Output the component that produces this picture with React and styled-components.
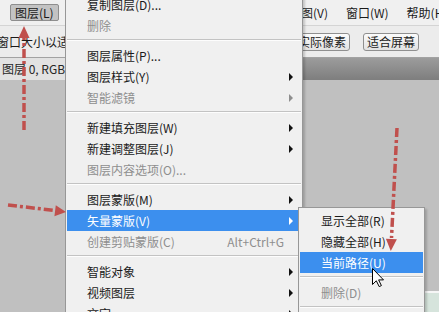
import React from "react";
import styled, { createGlobalStyle, css } from "styled-components";

const GlobalStyle = createGlobalStyle`
  html, body {
    margin: 0;
    padding: 0;
  }
  body {
    width: 439px;
    height: 312px;
    overflow: hidden;
    background: #c0c0c0;
    font-family: "Noto Sans CJK SC", "Microsoft YaHei", sans-serif;
    font-size: 12px;
    color: #1a1a1a;
  }
`;

const RED = "#c0504d";

const Screen = styled.div`
  position: relative;
  width: 439px;
  height: 312px;
  overflow: hidden;
  display: flex;
  flex-direction: column;
`;

const MenuBar = styled.div`
  flex: none;
  height: 25px;
  display: flex;
  align-items: center;
  padding-left: 10px;
  background: #f0f0f0;
  border-bottom: 1px solid #d4d4d4;
  white-space: nowrap;
`;

const BarItem = styled.div`
  box-sizing: border-box;
  height: 17px;
  line-height: 15px;
  padding: 0 8px;
  border: 1px solid transparent;
  flex: none;

  ${(p) =>
    p.$open &&
    css`
      background: #c3c3c3;
      border-color: #8e8e8e;
      border-radius: 2px;
      padding: 0 4px;
    `}
`;

const OptionsBar = styled.div`
  flex: none;
  height: 31px;
  display: flex;
  align-items: center;
  gap: 13px;
  background: #ececec;
  border-bottom: 1px solid #a2a2a2;
  white-space: nowrap;
`;

const OptionLabel = styled.div`
  flex: 0 0 284px;
  margin-left: -3px;
  overflow: hidden;
`;

const OptionButton = styled.div`
  flex: none;
  box-sizing: border-box;
  width: 56px;
  height: 18px;
  line-height: 16px;
  text-align: center;
  border: 1px solid #8f8f8f;
  border-radius: 3px;
  background: linear-gradient(#fbfbfb, #e2e2e2);
`;

const TabBar = styled.div`
  flex: none;
  height: 22px;
  display: flex;
  background: linear-gradient(#9c9c9c, #7e7e7e);
`;

const DocTab = styled.div`
  flex: 0 0 250px;
  padding-left: 2px;
  line-height: 22px;
  background: #e2e2e2;
  color: #262626;
  white-space: nowrap;
  overflow: hidden;
`;

const Canvas = styled.div`
  flex: 1;
  background: #c0c0c0;
  padding-top: 211px;
`;

const DocImage = styled.div`
  margin-left: 200px;
  height: 20px;
  background: #d6e4dc;
  border-top: 2px solid #f6f6f6;
`;

const Menu = styled.div`
  position: absolute;
  left: ${(p) => p.$left}px;
  top: ${(p) => p.$top}px;
  width: ${(p) => p.$width}px;
  box-sizing: border-box;
  padding: 2px 1px;
  background: #f0f0f0;
  border: 1px solid #979797;
  box-shadow: 2px 2px 2px rgba(0, 0, 0, 0.18);
  z-index: ${(p) => p.$z};
`;

const Item = styled.div`
  display: flex;
  align-items: center;
  height: 21px;
  line-height: 21px;
  padding: 0 8px 0 ${(p) => p.$indent}px;
  white-space: nowrap;
  color: ${(p) => (p.$active ? "#fff" : p.$disabled ? "#8e8e8e" : "#1a1a1a")};
  background: ${(p) => (p.$active ? "#3c8fee" : "transparent")};
`;

const Label = styled.span`
  flex: 1;
`;

const Shortcut = styled.span`
  margin-right: 5px;
`;

const SubArrow = styled.span`
  flex: none;
  width: 0;
  height: 0;
  border-top: 4px solid transparent;
  border-bottom: 4px solid transparent;
  border-left: 4px solid
    ${(p) => (p.$hidden ? "transparent" : p.$active ? "#fff" : p.$disabled ? "#8e8e8e" : "#111")};
`;

const Separator = styled.div`
  height: 9px;
  box-sizing: border-box;
  padding-top: 3px;

  &::before {
    content: "";
    display: block;
    height: 1px;
    background: #c3c3c3;
    border-bottom: 1px solid #fdfdfd;
  }
`;

const Overlay = styled.svg`
  position: absolute;
  left: 0;
  top: 0;
  z-index: 5;
  pointer-events: none;
`;

const Cursor = styled.svg`
  position: absolute;
  left: 371px;
  top: 267px;
  z-index: 6;
`;

const layerMenu = [
  { label: "复制图层(D)..." },
  { label: "删除", disabled: true },
  "sep",
  { label: "图层属性(P)..." },
  { label: "图层样式(Y)", sub: true },
  { label: "智能滤镜", sub: true, disabled: true },
  "sep",
  { label: "新建填充图层(W)", sub: true },
  { label: "新建调整图层(J)", sub: true },
  { label: "图层内容选项(O)...", disabled: true },
  "sep",
  { label: "图层蒙版(M)", sub: true },
  { label: "矢量蒙版(V)", sub: true, active: true },
  { label: "创建剪贴蒙版(C)", disabled: true, shortcut: "Alt+Ctrl+G" },
  "sep",
  { label: "智能对象", sub: true },
  { label: "视频图层", sub: true },
  { label: "文字", sub: true },
];

const vectorMaskMenu = [
  { label: "显示全部(R)" },
  { label: "隐藏全部(H)" },
  { label: "当前路径(U)", active: true },
  "sep",
  { label: "删除(D)", disabled: true },
  "sep",
  { label: "启用(E)", disabled: true },
];

function MenuList({ items, indent, arrows }) {
  return items.map((it, i) =>
    it === "sep" ? (
      <Separator key={i} />
    ) : (
      <Item key={i} $indent={indent} $active={it.active} $disabled={it.disabled}>
        <Label>{it.label}</Label>
        {it.shortcut && <Shortcut>{it.shortcut}</Shortcut>}
        {arrows && <SubArrow $hidden={!it.sub} $active={it.active} $disabled={it.disabled} />}
      </Item>
    )
  );
}

function DashArrow({ from, to, tip, head }) {
  return (
    <g>
      <line
        x1={from[0]}
        y1={from[1]}
        x2={to[0]}
        y2={to[1]}
        stroke={RED}
        strokeWidth="3.5"
        strokeDasharray="9 3 3 3"
      />
      <polygon points={`${tip[0]},${tip[1]} ${head[0][0]},${head[0][1]} ${head[1][0]},${head[1][1]}`} fill={RED} />
    </g>
  );
}

export default function App() {
  return (
    <>
      <GlobalStyle />
      <Screen>
        <MenuBar>
          <BarItem $open>图层(L)</BarItem>
          <BarItem>选择(S)</BarItem>
          <BarItem>滤镜(T)</BarItem>
          <BarItem>分析(A)</BarItem>
          <BarItem>3D(D)</BarItem>
          <BarItem>视图(V)</BarItem>
          <BarItem>窗口(W)</BarItem>
          <BarItem>帮助(H)</BarItem>
        </MenuBar>
        <OptionsBar>
          <OptionLabel>窗口大小以适合屏幕</OptionLabel>
          <OptionButton>实际像素</OptionButton>
          <OptionButton>适合屏幕</OptionButton>
        </OptionsBar>
        <TabBar>
          <DocTab>图层 0, RGB/8) *</DocTab>
        </TabBar>
        <Canvas>
          <DocImage />
        </Canvas>

        <Menu $left={65} $top={-9} $width={238} $z={2}>
          <MenuList items={layerMenu} indent={20} arrows />
        </Menu>
        <Menu $left={298} $top={207} $width={127} $z={3}>
          <MenuList items={vectorMaskMenu} indent={21} />
        </Menu>

        <Overlay width="439" height="312" viewBox="0 0 439 312">
          <DashArrow from={[24, 130]} to={[24, 37]} tip={[24, 26]} head={[[18.5, 38], [29.5, 38]]} />
          <DashArrow from={[8, 205]} to={[55, 210.5]} tip={[66, 212]} head={[[54.4, 216.2], [55.8, 205.2]]} />
          <DashArrow from={[397, 128]} to={[391.5, 238]} tip={[390.8, 251]} head={[[396.9, 239.3], [385.9, 238.7]]} />
        </Overlay>
        <Cursor width="13" height="21" viewBox="0 0 13 21">
          <path
            d="M1.5 1.5 L1.5 17.5 L5.3 13.8 L8.2 19.6 L10.4 18.6 L7.6 12.9 L12.5 12.9 Z"
            fill="#fff"
            stroke="#000"
            strokeWidth="1"
            strokeLinejoin="miter"
          />
        </Cursor>
      </Screen>
    </>
  );
}
